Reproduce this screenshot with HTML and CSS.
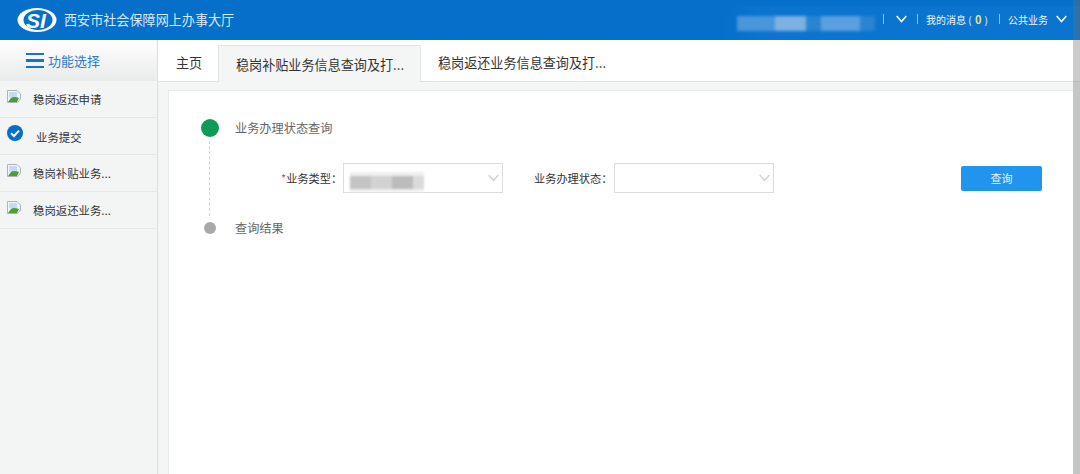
FILE: index.html
```html
<!DOCTYPE html>
<html lang="zh">
<head>
<meta charset="utf-8">
<title>西安市社会保障网上办事大厅</title>
<link rel="stylesheet" href="styles.css">
</head>
<body>
<header class="topbar">
  <div class="brand">
    <svg class="logo" viewBox="0 0 40 26" width="40" height="26">
      <ellipse cx="20" cy="13" rx="19.5" ry="12" fill="#fff"/>
      <ellipse cx="21" cy="13" rx="14.5" ry="10" fill="#056fc9"/>
      <text x="9" y="21" class="logo-text">SI</text>
    </svg>
    <span class="brand-name">西安市社会保障网上办事大厅</span>
  </div>
  <nav class="topnav">
    <div class="user-blur"><i></i><i></i><i></i><i></i><i></i></div>
    <span class="sep"></span>
    <svg class="chev" viewBox="0 0 11 8" width="11" height="8"><path d="M.7 1l4.800 5.500L10.300 1" fill="none" stroke="#fff" stroke-width="1.500"/></svg>
    <span class="sep"></span>
    <span class="nav-text">我的消息 ( <b class="count">0</b> )</span>
    <span class="sep"></span>
    <span class="nav-text">公共业务</span>
    <svg class="chev last" viewBox="0 0 11 8" width="11" height="8"><path d="M.7 1l4.800 5.500L10.300 1" fill="none" stroke="#fff" stroke-width="1.500"/></svg>
  </nav>
</header>
<div class="body">
  <aside class="sidebar">
    <div class="side-head">
      <span class="burger"><i></i><i></i><i></i></span>
      <span>功能选择</span>
    </div>
    <ul class="side-list">
      <li class="side-item"><svg class="broken" viewBox="0 0 14 13" width="14" height="13"><path d="M.5.5h9.500l3.500 3.500v5l-3 3.500h-10z" fill="#f4f7fa" stroke="#aab2ba"/><path d="M2 2h8v5.500H2z" fill="#c5d9f0"/><path d="M1 12l3-4c2-1.500 5-1 8 0l-2 4z" fill="#4f9a3c"/></svg><span>稳岗返还申请</span></li>
      <li class="side-item done"><svg class="check" viewBox="0 0 16 16" width="16" height="16"><circle cx="8" cy="8" r="8" fill="#056fc9"/><path d="M4 8.200l3 2.800 5-5.400" fill="none" stroke="#fff" stroke-width="2"/></svg><span>业务提交</span></li>
      <li class="side-item"><svg class="broken" viewBox="0 0 14 13" width="14" height="13"><path d="M.5.5h9.500l3.500 3.500v5l-3 3.500h-10z" fill="#f4f7fa" stroke="#aab2ba"/><path d="M2 2h8v5.500H2z" fill="#c5d9f0"/><path d="M1 12l3-4c2-1.500 5-1 8 0l-2 4z" fill="#4f9a3c"/></svg><span>稳岗补贴业务...</span></li>
      <li class="side-item"><svg class="broken" viewBox="0 0 14 13" width="14" height="13"><path d="M.5.5h9.500l3.500 3.500v5l-3 3.500h-10z" fill="#f4f7fa" stroke="#aab2ba"/><path d="M2 2h8v5.500H2z" fill="#c5d9f0"/><path d="M1 12l3-4c2-1.500 5-1 8 0l-2 4z" fill="#4f9a3c"/></svg><span>稳岗返还业务...</span></li>
    </ul>
  </aside>
  <main class="main">
    <div class="tabs">
      <div class="tab home">主页</div>
      <div class="tab active">稳岗补贴业务信息查询及打...</div>
      <div class="tab">稳岗返还业务信息查询及打...</div>
    </div>
    <div class="content">
      <section class="card">
        <div class="step">
          <span class="dot-wrap"><span class="dot big"></span></span>
          <span class="step-title">业务办理状态查询</span>
        </div>
        <div class="step-body">
          <div class="form-row">
            <label class="field-label type-label"><em>*</em>业务类型<span class="colon">：</span></label>
            <div class="select"><span class="blur-val"><i></i><i></i><i></i><i></i></span><svg class="sel-chev" viewBox="0 0 11 8" width="11" height="8"><path d="M.7 1l4.800 5.500L10.300 1" fill="none" stroke="#cfcfcf" stroke-width="1.300"/></svg></div>
            <label class="field-label status-label">业务办理状态<span class="colon">：</span></label>
            <div class="select"><svg class="sel-chev" viewBox="0 0 11 8" width="11" height="8"><path d="M.7 1l4.800 5.500L10.300 1" fill="none" stroke="#cfcfcf" stroke-width="1.300"/></svg></div>
            <button class="btn" type="button">查询</button>
          </div>
        </div>
        <div class="step">
          <span class="dot-wrap"><span class="dot small"></span></span>
          <span class="step-title">查询结果</span>
        </div>
      </section>
    </div>
  </main>
</div>
<div class="edge"></div>
</body>
</html>
```
FILE: styles.css
```css
* { box-sizing: border-box; }
html, body { margin: 0; height: 100%; overflow: hidden; }
body {
  font-family: "Microsoft YaHei", "Noto Sans CJK SC", "Liberation Sans", sans-serif;
  font-size: 12px;
  color: #333;
  display: flex;
  flex-direction: column;
  background: #fff;
  position: relative;
}
i { display: block; font-style: normal; }
.edge {
  position: absolute;
  top: 0;
  bottom: 0;
  right: 0;
  width: 7px;
  background: rgba(110, 110, 110, .36);
}
.topbar {
  height: 40px;
  flex: none;
  background: #056fc9;
  display: flex;
  justify-content: space-between;
  color: #fff;
}
.brand { display: flex; align-items: center; padding-left: 17px; gap: 7px; }
.logo { display: block; }
.logo-text { font: italic bold 21px "Liberation Sans", sans-serif; fill: #fff; }
.brand-name { font-size: 13.1px; color: #d8e9f8; padding-bottom: 2px; }
.topnav {
  display: flex;
  align-items: center;
  height: 34px;
  margin-top: 6px;
  padding: 0 13px 8px 17px;
  width: 360px;
  border-radius: 22px 0 0 0;
  background: linear-gradient(90deg, #056fc9, #0a74cf 12%, #0a74cf);
}
.user-blur { display: flex; width: 138px; height: 15px; margin-top: 8px; filter: blur(1.5px); flex: none; }
.user-blur i { background: #4a96da; flex: 1; }
.user-blur i:nth-child(2) { background: #7cb1e2; flex: .8; }
.user-blur i:nth-child(3) { background: #2a84d2; flex: .4; }
.user-blur i:nth-child(4) { background: #5ba0de; }
.user-blur i:nth-child(5) { background: #2a84d2; flex: .4; }
.sep { width: 1px; height: 10px; background: #8fc0ea; margin: -1px 8px 0; flex: none; }
.nav-text + .sep { margin-left: 11px; }
.nav-text { font-size: 10px; color: #f2f7fc; white-space: nowrap; }
.count { color: #e6e27a; font-weight: 700; font-size: 11px; padding: 0 1px; }
.chev { display: block; margin: 0 2px 0 4px; flex: none; }
.chev.last { margin: 0 0 0 8px; }
.body { flex: 1; display: flex; min-height: 0; }
.sidebar { width: 158px; flex: none; background: #f3f5f5; border-right: 1px solid #dcdedf; }
.side-head {
  height: 41px;
  display: flex;
  align-items: center;
  padding-left: 26px;
  gap: 4px;
  color: #2c7cc7;
  font-size: 13px;
  background: linear-gradient(#fff, #e9eaea);
}
.burger { display: flex; flex-direction: column; gap: 4px; width: 18px; }
.burger i { height: 2.5px; background: #1673c6; }
.side-list { list-style: none; margin: 0; padding: 0; }
.side-item {
  height: 37px;
  display: flex;
  align-items: center;
  padding: 0 0 0 7px;
  gap: 12px;
  font-size: 11.4px;
  color: #333;
  border-bottom: 1px solid #e6e8e8;
}
.broken { margin-top: -5px; flex: none; }
.check { margin-top: -8px; flex: none; }
.done { gap: 13px; padding: 2px 0 0 7px; }
.main { flex: 1; display: flex; flex-direction: column; min-width: 0; }
.tabs { height: 42px; flex: none; display: flex; align-items: stretch; padding-left: 1px; border-bottom: 1px solid #e2e4e4; background: #fff; }
.tab { padding: 0 17px; font-size: 13.1px; line-height: 45px; color: #333; white-space: nowrap; }
.tab.home { width: 59px; padding: 0 0 0 17px; }
.tab.active { margin-top: 5px; margin-bottom: -1px; width: 203px; line-height: 37px; height: 37px; background: #f4f6f6; border: 1px solid #e2e4e4; border-bottom: 0; padding: 0 16px 0 17px; }
.content { flex: 1; background: #f4f6f6; padding: 8px 7px 0 10px; min-height: 0; }
.card { background: #fff; height: 100%; padding: 28px 0 0 32px; border-left: 1px solid #eaecec; border-top: 1px solid #eaecec; }
.step { display: flex; align-items: center; height: 18px; }
.dot-wrap { width: 18px; display: flex; justify-content: center; flex: none; }
.dot { display: block; border-radius: 50%; }
.dot.big { width: 18px; height: 18px; background: #0f9b57; }
.dot.small { width: 12px; height: 12px; background: #a9a9a9; }
.step-title { margin-left: 16px; color: #666; font-size: 12.2px; padding-bottom: 1px; }
.step-body { margin: 4px 0 3px 8px; border-left: 1px dashed #cfcfcf; height: 75px; padding-top: 22px; }
.form-row { display: flex; align-items: center; height: 30px; }
.field-label { font-size: 11.2px; color: #333; white-space: nowrap; flex: none; }
.field-label em { color: #e8473f; font-style: normal; }
.colon { font-family: "Noto Sans CJK TC", sans-serif; }
.type-label { margin-left: 71px; width: 62px; }
.status-label { margin-left: 31px; width: 80px; }
.select { width: 160px; height: 30px; border: 1px solid #dcdcdc; background: #fff; position: relative; display: flex; align-items: center; padding-right: 3px; justify-content: flex-end; flex: none; }
.blur-val { position: absolute; left: 6px; top: 8px; width: 74px; height: 20px; display: flex; background: #efefef; filter: blur(1px); padding-top: 4px; }
.blur-val i { flex: 1; background: #c4c4c4; height: 13px; }
.blur-val i:nth-child(2) { background: #d2d2d2; }
.blur-val i:nth-child(3) { background: #bcbcbc; }
.blur-val i:nth-child(4) { background: #dadada; flex: .5; }
.sel-chev { display: block; }
.btn { margin-left: 187px; width: 81px; height: 25px; border: 0; border-radius: 2px; background: #2194ed; color: #e6f3fd; font: 11px "Noto Sans CJK SC", sans-serif; flex: none; }
```
